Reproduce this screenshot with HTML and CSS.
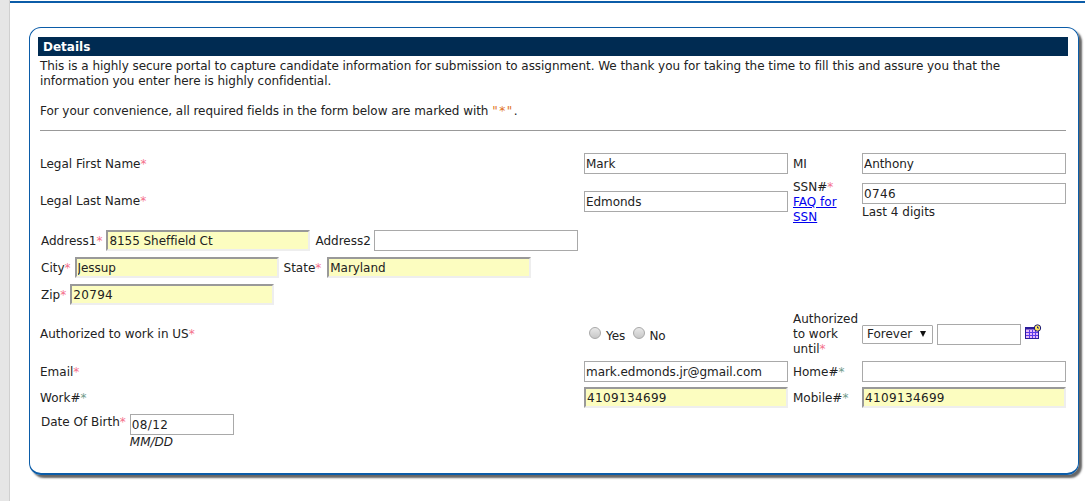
FILE: index.html
```html
<!DOCTYPE html>
<html>
<head>
<title>Candidate Details</title>
<link rel="stylesheet" href="styles.css">
</head>
<body>
  <div id="page">
    <div id="card">
      <div id="header">Details</div>
      <div id="intro">
        <p>This is a highly secure portal to capture candidate information for submission to assignment. We thank you for taking the time to fill this and assure you that the information you enter here is highly confidential.</p>
        <p>For your convenience, all required fields in the form below are marked with <span class="orange">"*"</span>.</p>
      </div>
      <hr>
      <form id="details">
        <div class="row row1">
          <label class="label-wide">Legal First Name<span class="req">*</span></label>
          <input class="field" type="text" value="Mark">
          <label class="label-side">MI</label>
          <input class="field" type="text" value="Anthony">
        </div>
        <div class="row row2">
          <label class="label-wide">Legal Last Name<span class="req">*</span></label>
          <input class="field" type="text" value="Edmonds">
          <div class="label-side ssn">SSN#<span class="req">*</span><br><a href="#">FAQ for SSN</a></div>
          <div class="stack">
            <input class="field num" type="text" value="0746">
            <span class="hint">Last 4 digits</span>
          </div>
        </div>
        <div class="line line-address">
          <label>Address1<span class="req">*</span></label>
          <input class="field need" type="text" value="8155 Sheffield Ct">
          <label class="next">Address2</label>
          <input class="field" type="text">
        </div>
        <div class="line line-city">
          <label>City<span class="req">*</span></label>
          <input class="field need" type="text" value="Jessup">
          <label class="next">State<span class="req">*</span></label>
          <input class="field need" type="text" value="Maryland">
        </div>
        <div class="line line-zip">
          <label>Zip<span class="req">*</span></label>
          <input class="field need num" type="text" value="20794">
        </div>
        <div class="row row-auth">
          <label class="label-wide">Authorized to work in US<span class="req">*</span></label>
          <div class="radios">
            <input type="radio" name="auth" id="yes"><label for="yes">Yes</label>
            <input type="radio" name="auth" id="no"><label for="no">No</label>
          </div>
          <label class="label-side">Authorized to work until<span class="req">*</span></label>
          <div class="until">
            <div class="select">Forever<span class="arrow"></span></div>
            <input class="field short" type="text">
            <svg class="cal" width="17" height="16" viewBox="0 0 17 16">
              <rect x="0.5" y="3.5" width="13" height="11" fill="#e8b8f8" stroke="#2a1a9a"/>
              <rect x="0.5" y="3.5" width="13" height="2" fill="#2a1a9a"/>
              <path d="M4.5 6v8M7.5 6v8M10.5 6v8M1 8.5h12M1 11.5h12" stroke="#5a3ae8" fill="none"/>
              <circle cx="12.5" cy="4" r="3.2" fill="#ffe860" stroke="#1a1a7a"/>
              <path d="M12.5 2.5V4h1.5" stroke="#1a1a7a" fill="none"/>
            </svg>
          </div>
        </div>
        <div class="row row-email">
          <label class="label-wide">Email<span class="req">*</span></label>
          <input class="field" type="text" value="mark.edmonds.jr@gmail.com">
          <label class="label-side">Home#<span class="req-alt">*</span></label>
          <input class="field" type="text">
        </div>
        <div class="row row-work">
          <label class="label-wide">Work#<span class="req-alt">*</span></label>
          <input class="field need num" type="text" value="4109134699">
          <label class="label-side">Mobile#<span class="req-alt">*</span></label>
          <input class="field need num" type="text" value="4109134699">
        </div>
        <div class="line line-dob">
          <label class="dob-label">Date Of Birth<span class="req">*</span></label>
          <div class="stack">
            <input class="field dob num" type="text" value="08/12">
            <span class="format">MM/DD</span>
          </div>
        </div>
      </form>
    </div>
  </div>
</body>
</html>
```

FILE: styles.css
```css
html, body {
  margin: 0;
  padding: 0;
  background-color: #ffffff;
}

body {
  font-family: "DejaVu Sans", Verdana, sans-serif;
  font-size: 12px;
  line-height: 15px;
  color: #222222;
}

#page {
  margin-left: 9px;
  height: 501px;
  box-sizing: border-box;
  padding: 27px 6px 0 19px;
  border-left: 1px solid #d0d0d0;
  box-shadow: -9px 0 0 #e6e6e6;
  background: linear-gradient(#0b5ca8, #0b5ca8) no-repeat 0 1px / 100% 2px;
}

#card {
  box-sizing: border-box;
  width: 1050px;
  height: 448px;
  padding: 9px 10px 0 8px;
  border: 1px solid #0b5ca8;
  border-bottom-width: 2px;
  border-radius: 12px;
  box-shadow: 3px 3px 2px #666666;
}

#header {
  height: 19px;
  padding-left: 5px;
  line-height: 20px;
  font-size: 12px;
  font-weight: bold;
  color: #ffffff;
  background-color: #002b52;
}

#intro {
  padding: 3px 2px 0;
  letter-spacing: -0.05px;
}

#intro p {
  margin: 0 0 15px 0;
}

#intro p:last-child {
  margin-bottom: 0;
}

.orange {
  letter-spacing: 1.5px;
  color: #e07020;
}

hr {
  height: 1px;
  margin: 11px 2px 0;
  border: 0;
  background-color: #999999;
}

#details {
  padding-left: 2px;
}

.row {
  display: flex;
  align-items: center;
}

.label-wide {
  width: 544px;
  flex: none;
  box-sizing: border-box;
  padding-top: 2px;
}

.label-side {
  width: 74px;
  flex: none;
  box-sizing: border-box;
  padding: 2px 0 0 5px;
}

.req {
  color: #f4708a;
}

.req-alt {
  color: #6f9a8a;
}

.field {
  box-sizing: border-box;
  width: 204px;
  height: 21px;
  margin: 0;
  padding: 0 1px;
  flex: none;
  border: 1px solid #a9a9a9;
  font-family: "DejaVu Sans", Verdana, sans-serif;
  font-size: 12px;
  letter-spacing: -0.05px;
  color: #222222;
  background-color: #ffffff;
  outline: none;
}

.need {
  padding: 0 1px;
  border: 2px solid;
  border-color: #999999 #eeeeee #eeeeee #999999;
  background-color: #fcfdc0;
}

.num {
  letter-spacing: 0.35px;
}

.row1 {
  margin-top: 22px;
}

.row2 {
  margin-top: 6px;
  align-items: flex-start;
}

.row2 .label-wide {
  margin-top: 12px;
}

.row2 > .field {
  margin-top: 11px;
}

.ssn {
  padding-top: 0;
}

.stack {
  display: flex;
  flex-direction: column;
  margin-top: 3px;
}

a {
  color: #0000ee;
}

.hint {
  margin-top: 1px;
}

.line {
  display: flex;
  align-items: center;
  padding-left: 1px;
}

.line label {
  padding-top: 2px;
  white-space: nowrap;
}

.line-address {
  margin-top: 5px;
}

.line-city,
.line-zip {
  margin-top: 6px;
}

.line-address label:first-child {
  margin-right: 4px;
}

.line-city label:first-child {
  margin-right: 4px;
}

.line-zip label:first-child {
  margin-right: 4px;
}

.next {
  margin: 0 3px 0 5px;
}

.line-city .next {
  margin-right: 6px;
}

.row-auth {
  margin-top: 6px;
  height: 46px;
}

.row-auth .label-wide,
.row-auth .label-side {
  padding-top: 0;
}

.radios {
  display: flex;
  align-items: center;
  width: 204px;
  flex: none;
  padding-top: 2px;
}

.radios input {
  appearance: none;
  box-sizing: border-box;
  width: 12px;
  height: 12px;
  margin: 0 5px 4px 5px;
  border: 1px solid #a8a8a8;
  border-radius: 50%;
  background: linear-gradient(#e8e8e8, #c8c8c8);
}

.radios label {
  margin-top: 2px;
}

.radios input:last-of-type {
  margin-left: 8px;
  margin-right: 4px;
}

.until {
  display: flex;
  align-items: center;
}

.select {
  position: relative;
  box-sizing: border-box;
  width: 71px;
  height: 19px;
  padding-left: 4px;
  line-height: 17px;
  border: 1px solid #a9a9a9;
  border-radius: 1px;
}

.arrow {
  position: absolute;
  right: 6px;
  top: 5px;
  border-left: 3.5px solid transparent;
  border-right: 3.5px solid transparent;
  border-top: 6px solid #111111;
}

.short {
  width: 84px;
  margin-left: 4px;
}

.cal {
  margin: -5px 0 0 4px;
}

.row-email {
  margin-top: 4px;
}

.row-work {
  margin-top: 5px;
}

.line-dob {
  margin-top: 6px;
  align-items: flex-start;
}

.line-dob label {
  padding-top: 1px;
}

.dob-label {
  margin-right: 4px;
}

.line-dob .stack {
  margin-top: 0;
}

.dob {
  width: 104px;
}

.format {
  font-style: italic;
}
```
